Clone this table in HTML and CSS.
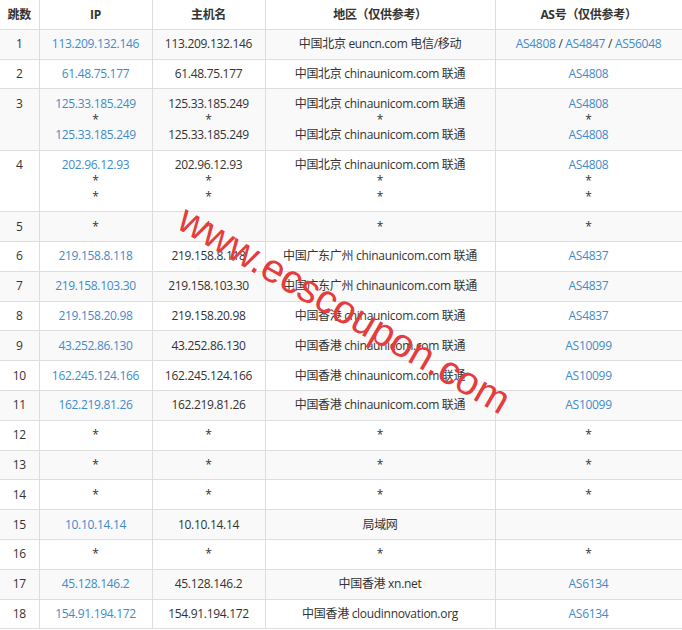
FILE: index.html
```html
<!DOCTYPE html>
<html lang="zh-CN">
<head>
<meta charset="utf-8">
<title>路由追踪</title>
<link rel="stylesheet" href="styles.css">
</head>
<body>
<div class="wrap">
<table class="trace">
  <colgroup>
    <col class="c-hop"><col class="c-ip"><col class="c-host"><col class="c-region"><col class="c-as">
  </colgroup>
  <thead>
    <tr><th>跳数</th><th>IP</th><th>主机名</th><th>地区（仅供参考）</th><th>AS号（仅供参考）</th></tr>
  </thead>
  <tbody>
    <tr><td>1</td><td><a>113.209.132.146</a></td><td>113.209.132.146</td><td>中国北京 euncn.com 电信/移动</td><td><a>AS4808</a> / <a>AS4847</a> / <a>AS56048</a></td></tr>
    <tr><td>2</td><td><a>61.48.75.177</a></td><td>61.48.75.177</td><td>中国北京 chinaunicom.com 联通</td><td><a>AS4808</a></td></tr>
    <tr><td>3</td><td><a>125.33.185.249</a><br>*<br><a>125.33.185.249</a></td><td>125.33.185.249<br>*<br>125.33.185.249</td><td>中国北京 chinaunicom.com 联通<br>*<br>中国北京 chinaunicom.com 联通</td><td><a>AS4808</a><br>*<br><a>AS4808</a></td></tr>
    <tr><td>4</td><td><a>202.96.12.93</a><br>*<br>*</td><td>202.96.12.93<br>*<br>*</td><td>中国北京 chinaunicom.com 联通<br>*<br>*</td><td><a>AS4808</a><br>*<br>*</td></tr>
    <tr><td>5</td><td>*</td><td>*</td><td>*</td><td>*</td></tr>
    <tr><td>6</td><td><a>219.158.8.118</a></td><td>219.158.8.118</td><td>中国广东广州 chinaunicom.com 联通</td><td><a>AS4837</a></td></tr>
    <tr><td>7</td><td><a>219.158.103.30</a></td><td>219.158.103.30</td><td>中国广东广州 chinaunicom.com 联通</td><td><a>AS4837</a></td></tr>
    <tr><td>8</td><td><a>219.158.20.98</a></td><td>219.158.20.98</td><td>中国香港 chinaunicom.com 联通</td><td><a>AS4837</a></td></tr>
    <tr><td>9</td><td><a>43.252.86.130</a></td><td>43.252.86.130</td><td>中国香港 chinaunicom.com 联通</td><td><a>AS10099</a></td></tr>
    <tr><td>10</td><td><a>162.245.124.166</a></td><td>162.245.124.166</td><td>中国香港 chinaunicom.com 联通</td><td><a>AS10099</a></td></tr>
    <tr><td>11</td><td><a>162.219.81.26</a></td><td>162.219.81.26</td><td>中国香港 chinaunicom.com 联通</td><td><a>AS10099</a></td></tr>
    <tr><td>12</td><td>*</td><td>*</td><td>*</td><td>*</td></tr>
    <tr><td>13</td><td>*</td><td>*</td><td>*</td><td>*</td></tr>
    <tr><td>14</td><td>*</td><td>*</td><td>*</td><td>*</td></tr>
    <tr><td>15</td><td><a>10.10.14.14</a></td><td>10.10.14.14</td><td>局域网</td><td></td></tr>
    <tr><td>16</td><td>*</td><td>*</td><td>*</td><td>*</td></tr>
    <tr><td>17</td><td><a>45.128.146.2</a></td><td>45.128.146.2</td><td>中国香港 xn.net</td><td><a>AS6134</a></td></tr>
    <tr><td>18</td><td><a>154.91.194.172</a></td><td>154.91.194.172</td><td>中国香港 cloudinnovation.org</td><td><a>AS6134</a></td></tr>
  </tbody>
</table>
<span class="watermark">www.ecscoupon.com</span>
</div>
</body>
</html>
```

FILE: styles.css
```css
html, body {
  margin: 0;
  padding: 0;
  background: #fff;
}
body {
  font-family: "Open Sans", "Noto Sans CJK SC", sans-serif;
  font-size: 12px;
  color: #333;
}
.wrap {
  position: relative;
  width: 682px;
  overflow: hidden;
}
.trace {
  width: 682px;
  table-layout: fixed;
  border-collapse: collapse;
  border-spacing: 0;
}
.c-hop { width: 39px; }
.c-ip { width: 113px; }
.c-host { width: 113px; }
.c-region { width: 230px; }
.c-as { width: 187px; }
.trace th,
.trace td {
  border: 1px solid #ddd;
  padding: 6.5px 2px;
  line-height: 15.8px;
  text-align: center;
  vertical-align: top;
  white-space: nowrap;
  letter-spacing: -0.3px;
}
.trace th {
  font-weight: bold;
  border-top: none;
}
.trace tr > :first-child {
  border-left: none;
}
.trace tbody tr:nth-child(odd) {
  background: #f9f9f9;
}
.trace a {
  color: #428bca;
  text-decoration: none;
}
.watermark {
  position: absolute;
  left: 193px;
  top: 196px;
  font-family: "Liberation Sans", Arial, sans-serif;
  font-size: 40px;
  color: #e63c3c;
  white-space: nowrap;
  transform: rotate(30deg);
  transform-origin: 0 0;
}
```
